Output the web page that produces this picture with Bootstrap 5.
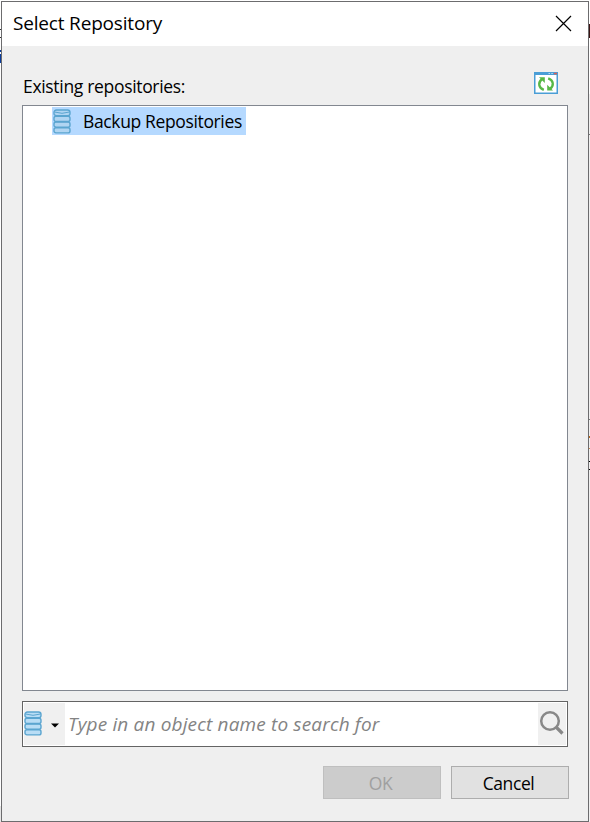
<!DOCTYPE html>
<html lang="en">
<head>
<meta charset="utf-8">
<meta name="viewport" content="width=device-width, initial-scale=1">
<title>Select Repository</title>
<link href="https://cdn.jsdelivr.net/npm/bootstrap@5.3.0/dist/css/bootstrap.min.css" rel="stylesheet">
<style>
  body { height: 822px; overflow: hidden; background: #fff; color: #000; font: 17.5px/24px "Open Sans", "Noto Sans", sans-serif; }
  .desk { width: 590px; height: 822px; padding: 1px 1px 0; }
  .dialog { height: 821px; background: #efefef; border: 1px solid #6c6c6e; z-index: 1; }
  .titlebar { height: 44px; padding: 0 15px 2px 11px; background: #fff; }
  .titlebar h1 { font-size: 19px; line-height: 24px; letter-spacing: -.18px; }
  .dialog-main { padding: 26px 20px 22px 20px; }
  .caption { height: 33px; padding: 0 10px 0 1px; }
  .caption label { padding-top: 2px; letter-spacing: -.32px; }
  .tree { height: 586px; padding: 1px 0 0 29px; border: 1px solid #828790; background: #fff; }
  .tree-node { width: 194px; height: 28px; padding: 0 0 0 1px; background: #b5d9ff; letter-spacing: -.36px; }
  .tree-node span { margin-left: 12px; }
  .search { height: 46px; margin-top: 10px; padding: 1px; border: 1px solid #646464; background: #fff; }
  .search-kind { width: 41px; background: #f0f0f0; border: 0; padding: 0 0 2px; }
  .search-go { width: 28px; background: #f0f0f0; border: 0; padding: 0 0 2px; }
  .search input { border: 0; min-width: 0; padding: 0 0 1px 3px; font-style: italic; font-size: 19px; letter-spacing: .16px; }
  .search input::placeholder { color: #838383; opacity: 1; }
  .actions { margin: 19px -1px 0 0; gap: 10px; }
  .btn-dlg { width: 118px; height: 33px; padding: 1px 3px 0 0; border: 1px solid #adadad; border-radius: 0; background: #e1e1e1; color: #000; font-size: 17.5px; line-height: 24px; letter-spacing: -.4px; }
  .btn-dlg:disabled { background: #ccc; border-color: #bfbfbf; color: #a0a0a0; opacity: 1; }
  .frag { position: absolute; width: 2px; }
</style>
<script src="https://cdn.jsdelivr.net/npm/bootstrap@5.3.0/dist/js/bootstrap.bundle.min.js"></script>
</head>
<body>
<div class="desk position-relative">
  <!-- slivers of the window behind the dialog -->
  <i class="frag" style="left:0;top:29px;height:1px;background:#333"></i>
  <i class="frag" style="left:0;top:37px;height:1px;background:#333"></i>
  <i class="frag" style="left:0;top:50px;height:2px;background:#0a3d9c"></i>
  <i class="frag" style="left:0;top:54px;height:9px;background:#0a3d9c"></i>
  <i class="frag" style="left:0;top:806px;height:16px;background:#e6e6e6"></i>
  <i class="frag" style="left:588px;top:94px;height:728px;background:#efefef"></i>
  <i class="frag" style="left:588px;top:24px;height:14px;background:#3a1414"></i>
  <i class="frag" style="left:588px;top:134px;height:1px;background:#777"></i>
  <i class="frag" style="left:588px;top:419px;height:1px;background:#777"></i>
  <i class="frag" style="left:588px;top:436px;height:2px;background:#b8681c"></i>
  <i class="frag" style="left:588px;top:448px;height:1px;background:#c98a50"></i>
  <i class="frag" style="left:588px;top:461px;height:1px;background:#000"></i>
  <i class="frag" style="left:588px;top:469px;height:1px;background:#000"></i>

  <svg width="0" height="0" class="position-absolute" aria-hidden="true">
    <symbol id="db" viewBox="0 0 18 25">
      <g stroke="#5ba5d0" stroke-width="1.400">
        <rect x="1" y="18.700" width="16" height="5.200" rx="2"/>
        <rect x="1" y="13" width="16" height="5.200" rx="2"/>
        <rect x="1" y="7.300" width="16" height="5.200" rx="2"/>
        <rect x="1" y="1" width="16" height="5.800" rx="2.400"/>
        <path d="M1.500 3Q9 5.600 16.500 3" fill="none" stroke-width="1"/>
      </g>
    </symbol>
  </svg>

  <div class="dialog d-flex flex-column position-relative" role="dialog" aria-label="Select Repository">
    <header class="titlebar d-flex align-items-center justify-content-between">
      <h1 class="m-0 fw-normal">Select Repository</h1>
      <svg width="20" height="20" viewBox="0 0 20 20" stroke="#000" stroke-width="1.200"><path d="M3 3L18 18M18 3L3 18"/></svg>
    </header>
    <main class="dialog-main d-flex flex-column flex-grow-1">
      <div class="caption d-flex justify-content-between align-items-start">
        <label>Existing repositories:</label>
        <svg width="24" height="22" viewBox="0 0 24 22">
          <rect x=".75" y=".75" width="22.500" height="20.500" fill="#fff" stroke="#4a9ed6" stroke-width="1.500"/>
          <path d="M0 0h24v3H0z" fill="#4a9ed6"/>
          <path d="M20 .8h3v1.500h-3z" fill="#d9605c"/>
          <path d="M14.500 1h1.500v1h-1.500zM17.300 1h1.500v1h-1.500z" fill="#b9dcf2"/>
          <g fill="none" stroke="#57b847" stroke-width="2.300"><path d="M9.800 17.800C4.500 15.800 3.500 10.500 8.200 7"/><path d="M14.200 6.300C19.500 8.300 20.500 13.500 15.800 17"/></g>
          <path d="M5 5.300h5.800v5.800zM19 18.600h-5.800v-5.800z" fill="#57b847"/>
        </svg>
      </div>
      <div class="tree">
        <div class="tree-node d-flex align-items-center">
          <svg width="18" height="25" fill="#b0d5f2"><use href="#db"/></svg>
          <span>Backup Repositories</span>
        </div>
      </div>
      <div class="search d-flex align-items-stretch">
        <button class="search-kind d-flex align-items-center" aria-label="Object type">
          <svg width="18" height="25" fill="#b9ddf5"><use href="#db"/></svg>
          <svg class="ms-2 mt-1" width="9" height="5" viewBox="0 0 9 5"><path d="M1 .500h8L5 4.500z"/></svg>
        </button>
        <input class="flex-grow-1" type="text" placeholder="Type in an object name to search for">
        <button class="search-go d-flex align-items-center justify-content-center" aria-label="Search">
          <svg width="26" height="26" viewBox="0 0 26 26" fill="none" stroke="#888"><circle cx="11" cy="11" r="8.800" stroke-width="2.500"/><path d="M17.500 17.500L23.500 23.500" stroke-width="3.200"/></svg>
        </button>
      </div>
      <div class="actions d-flex justify-content-end">
        <button class="btn btn-dlg" disabled>OK</button>
        <button class="btn btn-dlg">Cancel</button>
      </div>
    </main>
  </div>
</div>
</body>
</html>
